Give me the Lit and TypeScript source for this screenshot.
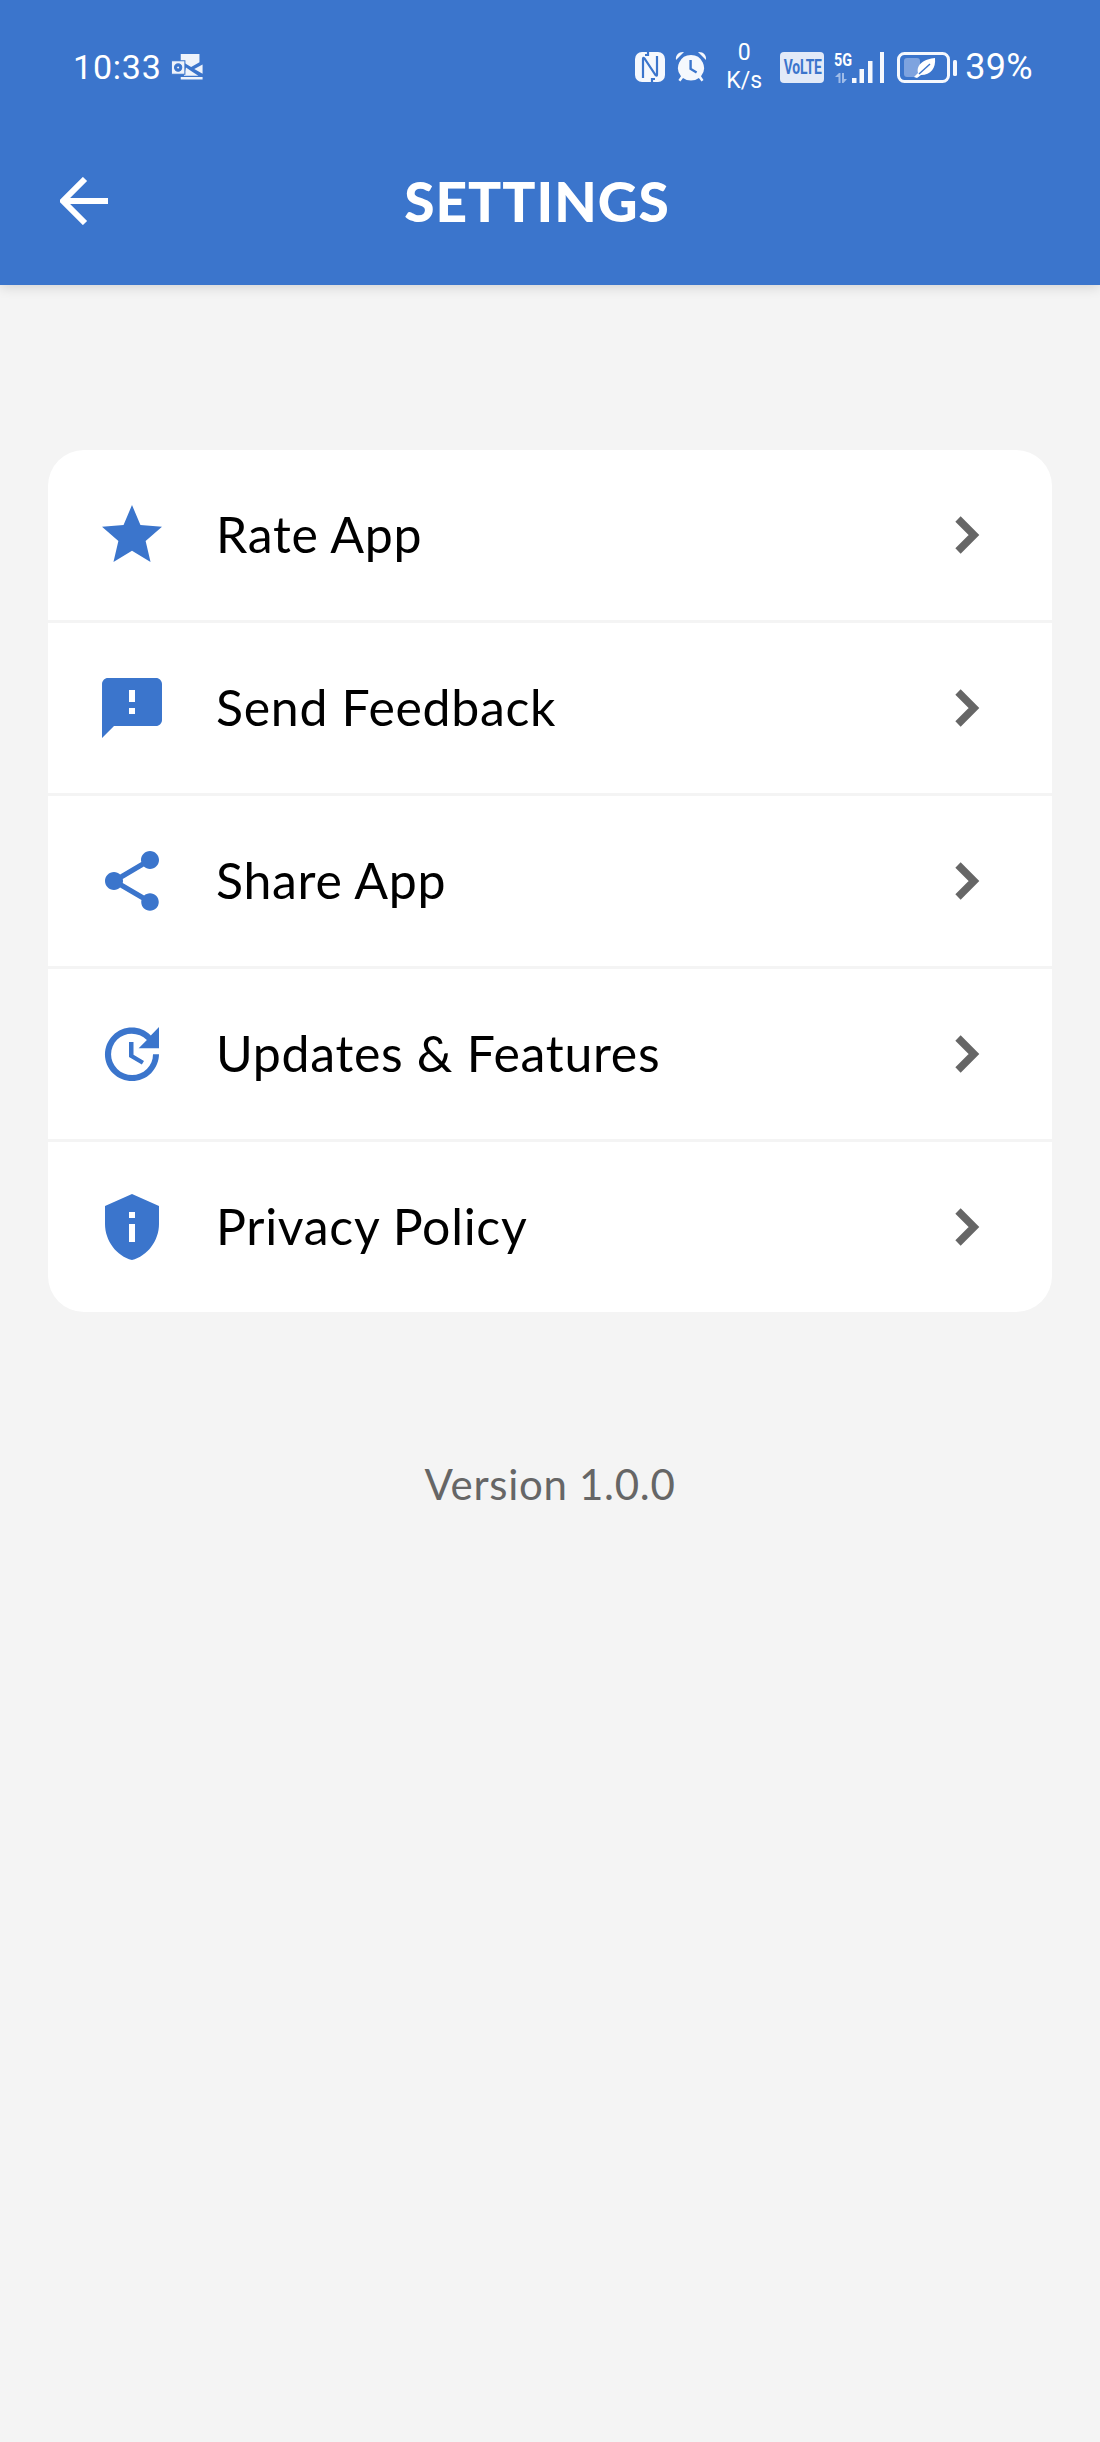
import { LitElement, html, css, svg } from 'lit'
import { customElement } from 'lit/decorators.js'

const ICONS = {
	star: svg`<path d="M12 17.27L18.18 21l-1.64-7.03L22 9.24l-7.19-.61L12 2 9.19 8.63 2 9.24l5.46 4.73L5.82 21z" />`,
	feedback: svg`<path d="M20 2H4c-1.1 0-1.99.9-1.99 2L2 22l4-4h14c1.1 0 2-.9 2-2V4c0-1.1-.9-2-2-2zm-7 12h-2v-2h2v2zm0-4h-2V6h2v4z" />`,
	share: svg`<path d="M18 16.08c-.76 0-1.44.3-1.96.77L8.91 12.7c.05-.23.09-.46.09-.7s-.04-.47-.09-.7l7.05-4.11c.54.5 1.25.81 2.04.81 1.66 0 3-1.34 3-3s-1.34-3-3-3-3 1.34-3 3c0 .24.04.47.09.7L8.04 9.81C7.5 9.31 6.79 9 6 9c-1.66 0-3 1.34-3 3s1.34 3 3 3c.79 0 1.5-.31 2.04-.81l7.12 4.16c-.05.21-.08.43-.08.65 0 1.61 1.31 2.92 2.92 2.92s2.92-1.31 2.92-2.92-1.31-2.92-2.92-2.92z" />`,
	update: svg`<path d="M21 10.12h-6.78l2.74-2.82c-2.73-2.7-7.15-2.8-9.88-.1-2.73 2.71-2.73 7.08 0 9.79s7.15 2.71 9.88 0C18.32 15.65 19 14.08 19 12.1h2c0 1.98-.88 4.55-2.64 6.29-3.51 3.48-9.21 3.48-12.72 0-3.5-3.47-3.53-9.11-.02-12.58s9.14-3.47 12.65 0L21 3v7.12zM12.5 8v4.25l3.5 2.08-.72 1.21L11 13V8h1.5z" />`,
	privacy: svg`<path fill-rule="evenodd" d="M12 1L3 5v6c0 5.55 3.84 10.74 9 12 5.16-1.26 9-6.45 9-12V5L12 1zM11 7h2v2h-2V7zm0 4h2v6h-2v-6z" />`,
}

const ROWS = [
	{ icon: ICONS.star, label: 'Rate App' },
	{ icon: ICONS.feedback, label: 'Send Feedback' },
	{ icon: ICONS.share, label: 'Share App' },
	{ icon: ICONS.update, label: 'Updates & Features' },
	{ icon: ICONS.privacy, label: 'Privacy Policy' },
]

@customElement('app-root')
export class AppRoot extends LitElement {
	static styles = css`
		:host {
			display: block;
			min-height: 2442px;
			background: #f4f4f4;
			font-family: 'Lato', 'Noto Sans', sans-serif;
		}
		.header {
			height: 285px;
			background: #3b75cc;
			color: #fff;
			box-shadow: 0 2px 12px rgba(0, 0, 0, 0.14);
		}
		.status {
			height: 134px;
			box-sizing: border-box;
			padding: 0 67px 0 73px;
			display: flex;
			align-items: center;
			font-family: 'Roboto', sans-serif;
		}
		.time {
			font-size: 34px;
			letter-spacing: 0.8px;
		}
		.outlook {
			width: 33px;
			height: 26px;
			margin-left: 9px;
		}
		.right {
			margin-left: auto;
			display: flex;
			align-items: center;
		}
		.nfc {
			width: 30px;
			height: 30px;
		}
		.alarm {
			width: 32px;
			height: 32px;
			margin-left: 10px;
		}
		.speed {
			width: 36px;
			margin-left: 19px;
			display: flex;
			flex-direction: column;
			align-items: center;
			font-size: 23px;
			line-height: 28px;
		}
		.volte {
			width: 44px;
			height: 31px;
			margin-left: 18px;
			border-radius: 4px;
			background: #e2eaf8;
			color: #3b75cc;
			display: flex;
			align-items: center;
			justify-content: center;
			font-size: 21px;
			font-weight: 700;
		}
		.volte span {
			display: block;
			transform: scaleX(0.66);
			letter-spacing: -0.3px;
		}
		.signal {
			width: 50px;
			height: 31px;
			margin-left: 10px;
			position: relative;
		}
		.signal svg {
			display: block;
		}
		.five-g {
			position: absolute;
			left: 0;
			top: -1px;
			font-size: 18px;
			line-height: 18px;
			font-weight: 700;
			transform: scaleX(0.8);
			transform-origin: left top;
		}
		.battery {
			width: 60px;
			height: 31px;
			margin-left: 13px;
		}
		.pct {
			margin-left: 8px;
			font-size: 36px;
			letter-spacing: 0.3px;
		}
		.toolbar {
			height: 134px;
			padding: 0 134px 0 60px;
			display: flex;
			align-items: center;
		}
		.back {
			width: 48px;
			height: 48px;
			flex: none;
		}
		.title {
			flex: 1;
			text-align: center;
			font-size: 55px;
			font-weight: 900;
			letter-spacing: 1px;
		}
		.card {
			margin: 165px 48px 0;
			background: #fff;
			border-radius: 36px;
			overflow: hidden;
		}
		.row {
			height: 170px;
			padding: 0 72px 0 48px;
			display: flex;
			align-items: center;
			border-top: 3px solid #f4f4f4;
		}
		.row:first-child {
			border-top: none;
		}
		.icon {
			width: 72px;
			height: 72px;
			flex: none;
			fill: #3b75cc;
		}
		.label {
			flex: 1;
			margin-left: 48px;
			padding-bottom: 2px;
			font-size: 50px;
			letter-spacing: 0.7px;
			color: #000;
		}
		.chevron {
			width: 26px;
			height: 40px;
			flex: none;
		}
		.version {
			margin-top: 147px;
			text-align: center;
			font-size: 42px;
			letter-spacing: 0.7px;
			color: #666;
		}
	`

	render() {
		return html`
			<div class="header">
				<div class="status">
					<span class="time">10:33</span>
					<svg class="outlook" viewBox="0 0 31 25">
						<path fill="#eef3fb" d="M9 0h18v8l-8 4.500L13 9H9zM30 10v9l-8-4.500zM14 13l6 4 6 4H12zM9 22h21v2.500H9z" />
						<path fill="#eef3fb" fill-rule="evenodd" stroke="#3b75cc" stroke-width="1" d="M0 6.500h13v13H0zM6.500 9.500a3.500 3.500 0 1 0 0 7 3.500 3.500 0 0 0 0-7zm0 2a1.500 1.500 0 1 1 0 3 1.500 1.500 0 0 1 0-3z" />
					</svg>
					<div class="right">
						<svg class="nfc" viewBox="0 0 30 30">
							<rect width="30" height="30" rx="7" fill="#f5f8fd" />
							<path fill="none" stroke="#3b75cc" stroke-width="2.200" d="M8 26V7q0-2 1.500-.500L20.500 23q1.500 1.500 1.500-.500V4M13 0v3H10M17 30v-3h3" />
						</svg>
						<svg class="alarm" viewBox="0 0 32 32">
							<path fill="#f5f8fd" fill-rule="evenodd" d="M16 4a13 13 0 0 1 10 21.300l2.500 3.700-2 1.400-2.600-3.500A13 13 0 0 1 8 26.900l-2.600 3.500-2-1.400L6 25.300A13 13 0 0 1 16 4zm-1.600 5v9.400l6.600 4 1.200-1.900-5.400-3.200V9z" />
							<path fill="#f5f8fd" d="M1 9c-.8-5 3-8.500 8-8zM31 9c.8-5-3-8.500-8-8z" />
						</svg>
						<div class="speed"><span>0</span><span>K/s</span></div>
						<div class="volte"><span>VoLTE</span></div>
						<div class="signal">
							<span class="five-g">5G</span>
							<svg width="50" height="31" viewBox="0 0 50 31">
								<path fill="#9fbce8" d="M1 25l4-4h1.500v10H4.500v-6zM8 21h2v6l3 0-3.500 4H9L8 31z" />
								<path fill="#f5f8fd" d="M18 26h4.500v5H18zM25.500 17h4.500v14h-4.500zM34 9h4.500v22H34zM46 0h4v31h-4z" />
							</svg>
						</div>
						<svg class="battery" viewBox="0 0 60 31">
							<rect x="1.500" y="1.500" width="50" height="28" rx="6" fill="none" stroke="#f5f8fd" stroke-width="3" />
							<rect x="7" y="6" width="16" height="19" rx="3" fill="#7ea3df" />
							<rect x="56" y="8" width="4" height="16" rx="1.500" fill="#f5f8fd" />
							<path fill="#fff" d="M38 6c1 10-4 17-14 17l-4 3-3-1 4-4C19 12 28 7 38 6z" />
							<path fill="none" stroke="#3b75cc" stroke-width="1.400" d="M22 22l11-10" />
						</svg>
						<span class="pct">39%</span>
					</div>
				</div>
				<div class="toolbar">
					<svg class="back" viewBox="0 0 48 48">
						<path d="M48 24H4M25 2L3 24l22 22" fill="none" stroke="#fff" stroke-width="6" />
					</svg>
					<div class="title">SETTINGS</div>
				</div>
			</div>
			<div class="card">
				${ROWS.map(
					(row) => html`
						<div class="row">
							<svg class="icon" viewBox="0 0 24 24">${row.icon}</svg>
							<span class="label">${row.label}</span>
							<svg class="chevron" viewBox="0 0 26 40">
								<path d="M4 4l16 16L4 36" fill="none" stroke="#666" stroke-width="7.500" />
							</svg>
						</div>
					`,
				)}
			</div>
			<div class="version">Version 1.0.0</div>
		`
	}
}
